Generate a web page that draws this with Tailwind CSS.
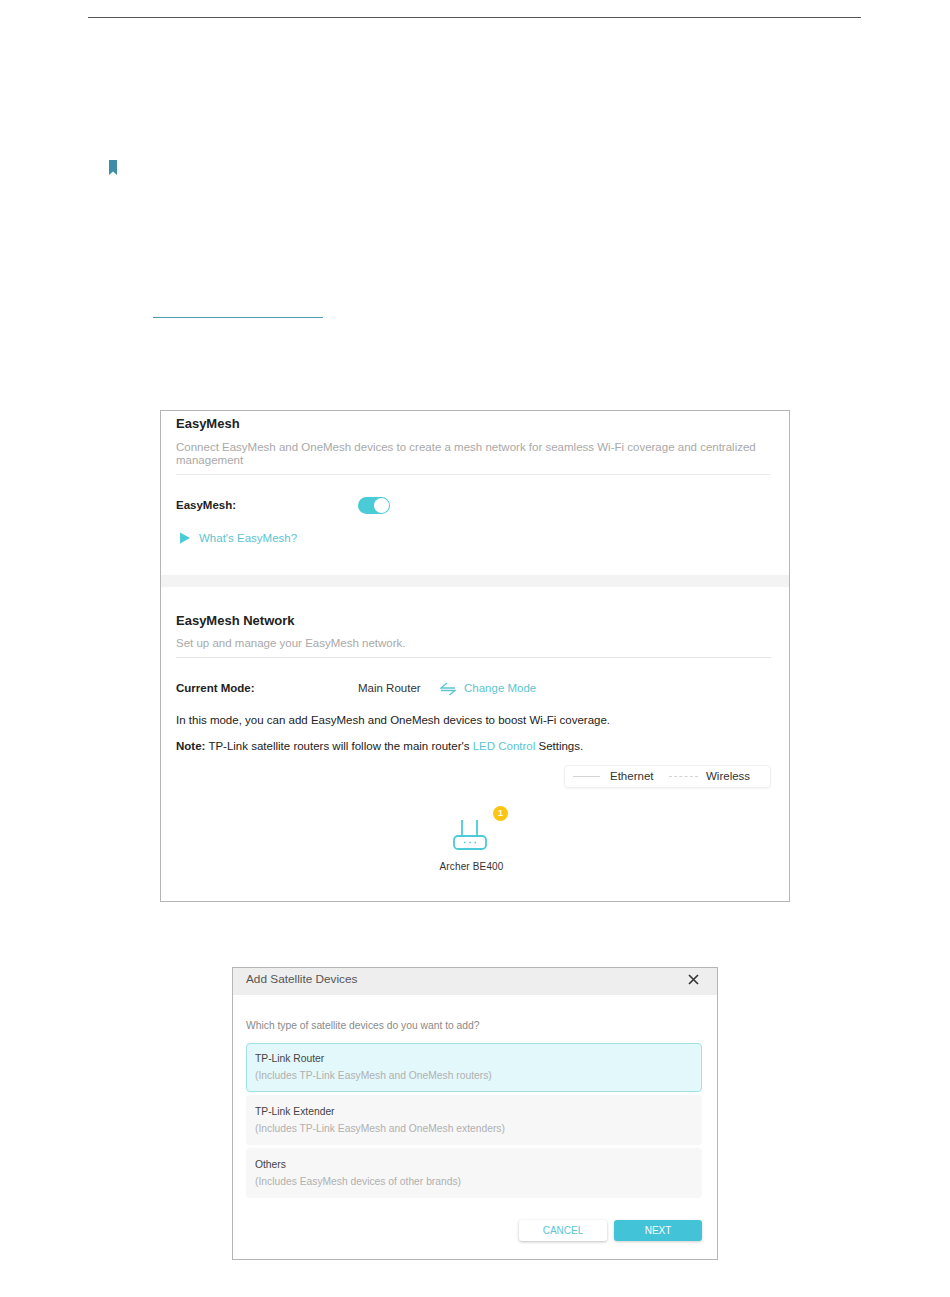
<!DOCTYPE html>
<html lang="en">
<head>
    <meta charset="UTF-8">
    <title>EasyMesh</title>
    <script src="https://cdn.jsdelivr.net/npm/@tailwindcss/browser@4"></script>
</head>
<body class="bg-white font-['Liberation_Sans',Arial,sans-serif] text-[11.5px] text-[#333]">
<div class="w-[950px] h-[1297px] overflow-hidden pt-[17px]">
    <!-- page header rule -->
    <div class="ml-[88px] w-[773px] h-px bg-[#555]"></div>

    <!-- bookmark -->
    <svg class="ml-[109px] mt-[142px] block" width="8" height="16" viewBox="0 0 8 16"><path d="M0 0H8V15L4 11.5L0 15Z" fill="#3f8ea8"/></svg>

    <!-- link underline -->
    <div class="ml-[153px] mt-[141px] w-[170px] h-px bg-[#4f9bb0]"></div>

    <!-- EasyMesh settings -->
    <section class="ml-[160px] mt-[92px] w-[630px] h-[492px] border border-[#b5b5b5] flex flex-col">
        <div class="pl-[15px] pr-[18px]">
            <h2 class="h-[27px] pt-[5px] text-[13px] leading-[16px] font-bold text-[#222]">EasyMesh</h2>
            <p class="mt-[3px] leading-[13px] text-[#a9a9a9] pb-[7px] border-b border-[#ececec]">Connect EasyMesh and OneMesh devices to create a mesh network for seamless Wi-Fi coverage and centralized<br>management</p>
            <div class="mt-[22px] h-[17px] flex items-center">
                <span class="w-[182px] font-bold text-[#222]">EasyMesh:</span>
                <span class="w-[32px] h-[17px] rounded-full bg-[#4acbd6] flex justify-end items-center pr-px">
                    <span class="w-[15px] h-[15px] rounded-full bg-white"></span>
                </span>
            </div>
            <div class="mt-[16px] h-[16px] flex items-center text-[#5cc5d2]">
                <svg class="ml-[4px]" width="10" height="12" viewBox="0 0 10 12"><path d="M0 0.5L10 6L0 11.5Z" fill="#4acbd6"/></svg>
                <span class="ml-[9px] mt-[1px]">What's EasyMesh?</span>
            </div>
        </div>
        <div class="mt-[29px] h-[12px] bg-[#f3f3f3]"></div>
        <div class="pl-[15px] pr-[18px] flex-1 flex flex-col">
            <h2 class="mt-[26px] text-[13px] leading-[16px] font-bold text-[#222]">EasyMesh Network</h2>
            <p class="mt-[7px] leading-[14px] text-[#a9a9a9] pb-[7px] border-b border-[#e4e4e4]">Set up and manage your EasyMesh network.</p>
            <div class="mt-[23px] h-[16px] flex items-center">
                <span class="w-[182px] font-bold text-[#222]">Current Mode:</span>
                <span class="w-[64px] text-[#333]">Main Router</span>
                <svg class="ml-[18px]" width="16" height="14" viewBox="0 0 16 14" fill="none" stroke="#5cc5d2" stroke-width="1.3"><path d="M7 1L1 6H15"/><path d="M1 8.500H15L9.500 13"/></svg>
                <span class="ml-[8px] text-[#5cc5d2]">Change Mode</span>
            </div>
            <p class="mt-[15px] leading-[16px] text-[#222]">In this mode, you can add EasyMesh and OneMesh devices to boost Wi-Fi coverage.</p>
            <p class="mt-[10px] leading-[16px] text-[#222]"><b>Note:</b> TP-Link satellite routers will follow the main router's <span class="text-[#5cc5d2]">LED Control</span> Settings.</p>
            <div class="self-end mt-[11px] w-[207px] h-[23px] rounded-[4px] border border-[#f0f0f0] shadow-[0_1px_2px_rgba(0,0,0,0.05)] flex items-center pl-[8px]">
                <span class="w-[27px] h-px bg-[#d4d4d4]"></span>
                <span class="ml-[10px] w-[44px] text-[#333]">Ethernet</span>
                <span class="ml-[15px] w-[29px] border-t border-dashed border-[#d4d4d4]"></span>
                <span class="ml-[8px] text-[#333]">Wireless</span>
            </div>
            <div class="relative mt-[31px] w-[80px] ml-[254px] flex flex-col items-center">
                <svg width="36" height="32" viewBox="0 0 36 32" fill="none" stroke="#4acbd6" stroke-width="1.8"><path d="M10 1V17"/><path d="M25 1V17"/><rect x="2" y="17" width="32" height="13" rx="4"/><path d="M12 23.500H13.500M17.300 23.500H18.800M22.500 23.500H24" stroke-width="1.300"/></svg>
                <span class="absolute left-[63px] top-[-13px] w-[15px] h-[15px] rounded-full bg-[#fdc50f] text-white text-[9px] font-bold leading-[15px] text-center">1</span>
                <span class="mt-[9px] ml-[3px] text-[10px] leading-[14px] tracking-[0.15px] whitespace-nowrap text-[#333]">Archer BE400</span>
            </div>
        </div>
    </section>

    <!-- Add Satellite Devices dialog -->
    <section class="ml-[232px] mt-[65px] w-[486px] h-[293px] border border-[#b5b5b5] flex flex-col">
        <div class="h-[27px] bg-[#eeeeee] flex items-start justify-between pl-[13px] pr-[18px] pt-[4px]">
            <span class="text-[11.8px] leading-[15px] text-[#555]">Add Satellite Devices</span>
            <svg class="mt-[2px]" width="11" height="11" viewBox="0 0 11 11" stroke="#333" stroke-width="1.6"><path d="M1 1L10 10M10 1L1 10"/></svg>
        </div>
        <div class="pl-[13px] pr-[15px] flex-1 flex flex-col">
            <p class="mt-[24px] text-[10.3px] leading-[14px] text-[#8a8a8a]">Which type of satellite devices do you want to add?</p>
            <div class="mt-[10px] h-[49px] rounded-[4px] border border-[#9fe3e3] bg-[#e3f8fb] pl-[8px] pt-[8px]">
                <div class="text-[10.3px] leading-[14px] text-[#444]">TP-Link Router</div>
                <div class="mt-[3px] text-[10.3px] leading-[14px] text-[#b0b0b0]">(Includes TP-Link EasyMesh and OneMesh routers)</div>
            </div>
            <div class="mt-[3px] h-[50px] rounded-[4px] bg-[#f7f7f7] pl-[9px] pt-[10px]">
                <div class="text-[10.3px] leading-[14px] text-[#444]">TP-Link Extender</div>
                <div class="mt-[3px] text-[10.3px] leading-[14px] text-[#b0b0b0]">(Includes TP-Link EasyMesh and OneMesh extenders)</div>
            </div>
            <div class="mt-[3px] h-[50px] rounded-[4px] bg-[#f7f7f7] pl-[9px] pt-[10px]">
                <div class="text-[10.3px] leading-[14px] text-[#444]">Others</div>
                <div class="mt-[3px] text-[10.3px] leading-[14px] text-[#b0b0b0]">(Includes EasyMesh devices of other brands)</div>
            </div>
            <div class="mt-[22px] flex justify-end gap-[7px]">
                <button class="w-[88px] h-[21px] rounded-[3px] bg-white shadow-[0_1px_3px_rgba(0,0,0,0.25)] text-[10px] text-[#5cc5d2]">CANCEL</button>
                <button class="w-[88px] h-[21px] rounded-[3px] bg-[#42c3d8] shadow-[0_1px_3px_rgba(0,0,0,0.2)] text-[10px] text-white">NEXT</button>
            </div>
        </div>
    </section>
</div>
</body>
</html>
